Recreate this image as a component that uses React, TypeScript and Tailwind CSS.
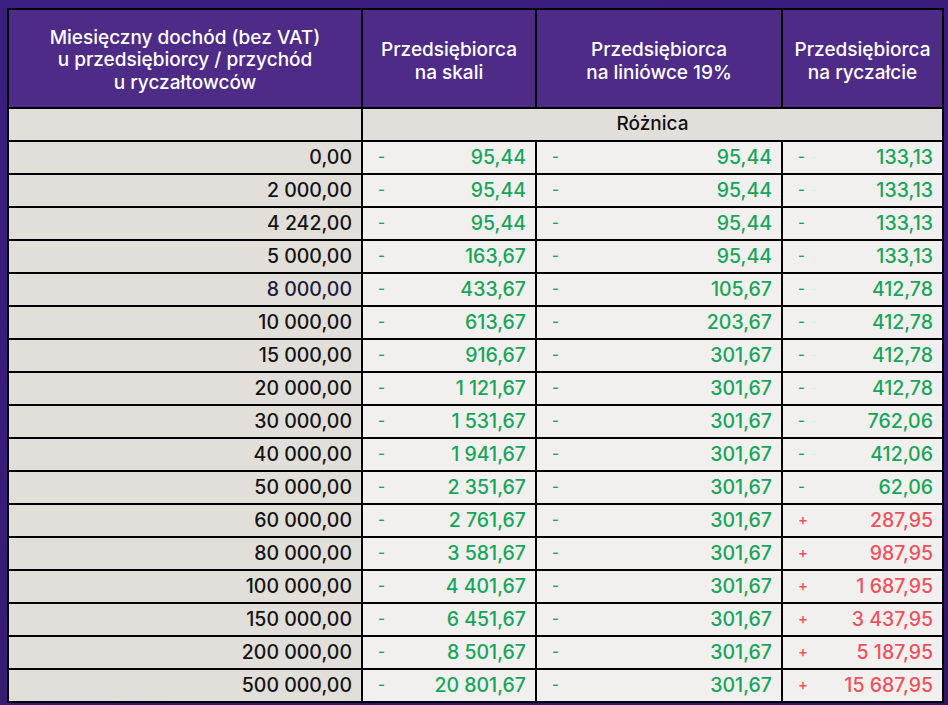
import React from "react";

type Cell = { sign: "-" | "+"; value: string };

const rows: { income: string; cells: Cell[] }[] = [
  { income: "0,00", cells: [{ sign: "-", value: "95,44" }, { sign: "-", value: "95,44" }, { sign: "-", value: "133,13" }] },
  { income: "2 000,00", cells: [{ sign: "-", value: "95,44" }, { sign: "-", value: "95,44" }, { sign: "-", value: "133,13" }] },
  { income: "4 242,00", cells: [{ sign: "-", value: "95,44" }, { sign: "-", value: "95,44" }, { sign: "-", value: "133,13" }] },
  { income: "5 000,00", cells: [{ sign: "-", value: "163,67" }, { sign: "-", value: "95,44" }, { sign: "-", value: "133,13" }] },
  { income: "8 000,00", cells: [{ sign: "-", value: "433,67" }, { sign: "-", value: "105,67" }, { sign: "-", value: "412,78" }] },
  { income: "10 000,00", cells: [{ sign: "-", value: "613,67" }, { sign: "-", value: "203,67" }, { sign: "-", value: "412,78" }] },
  { income: "15 000,00", cells: [{ sign: "-", value: "916,67" }, { sign: "-", value: "301,67" }, { sign: "-", value: "412,78" }] },
  { income: "20 000,00", cells: [{ sign: "-", value: "1 121,67" }, { sign: "-", value: "301,67" }, { sign: "-", value: "412,78" }] },
  { income: "30 000,00", cells: [{ sign: "-", value: "1 531,67" }, { sign: "-", value: "301,67" }, { sign: "-", value: "762,06" }] },
  { income: "40 000,00", cells: [{ sign: "-", value: "1 941,67" }, { sign: "-", value: "301,67" }, { sign: "-", value: "412,06" }] },
  { income: "50 000,00", cells: [{ sign: "-", value: "2 351,67" }, { sign: "-", value: "301,67" }, { sign: "-", value: "62,06" }] },
  { income: "60 000,00", cells: [{ sign: "-", value: "2 761,67" }, { sign: "-", value: "301,67" }, { sign: "+", value: "287,95" }] },
  { income: "80 000,00", cells: [{ sign: "-", value: "3 581,67" }, { sign: "-", value: "301,67" }, { sign: "+", value: "987,95" }] },
  { income: "100 000,00", cells: [{ sign: "-", value: "4 401,67" }, { sign: "-", value: "301,67" }, { sign: "+", value: "1 687,95" }] },
  { income: "150 000,00", cells: [{ sign: "-", value: "6 451,67" }, { sign: "-", value: "301,67" }, { sign: "+", value: "3 437,95" }] },
  { income: "200 000,00", cells: [{ sign: "-", value: "8 501,67" }, { sign: "-", value: "301,67" }, { sign: "+", value: "5 187,95" }] },
  { income: "500 000,00", cells: [{ sign: "-", value: "20 801,67" }, { sign: "-", value: "301,67" }, { sign: "+", value: "15 687,95" }] },
];

const headers = [
  ["Przedsiębiorca", "na skali"],
  ["Przedsiębiorca", "na liniówce 19%"],
  ["Przedsiębiorca", "na ryczałcie"],
];

export default function App() {
  return (
    <div className="h-[705px] w-[948px] overflow-hidden bg-[linear-gradient(160deg,#3c1d82_0%,#381b79_55%,#2f1766_100%)] pl-[7px] pt-[8px] font-['Inter','Liberation_Sans',sans-serif]">
      <table className="w-[935px] table-fixed border-collapse border-2 border-black">
        <colgroup>
          <col className="w-[354px]" />
          <col className="w-[174px]" />
          <col className="w-[246px]" />
          <col className="w-[161px]" />
        </colgroup>
        <thead>
          <tr className="h-[99px] bg-[#4e2b87] text-[19px] leading-[22.5px] text-white">
            <th className="border-2 border-black px-2 pt-[4px] font-medium">
              Miesięczny dochód (bez VAT)
              <br />u przedsiębiorcy / przychód
              <br />u ryczałtowców
            </th>
            {headers.map((h) => (
              <th key={h[1]} className="border-2 border-black px-1 pt-[6px] font-medium">
                {h[0]}
                <br />
                {h[1]}
              </th>
            ))}
          </tr>
          <tr className="h-[33px] bg-[#e2dfdb] text-[19px] text-[#111]">
            <th className="border-2 border-black" />
            <th colSpan={3} className="border-2 border-black font-medium">
              Różnica
            </th>
          </tr>
        </thead>
        <tbody>
          {rows.map((r) => (
            <tr key={r.income} className="h-[33px] text-[19.5px] font-medium">
              <td
                className={`border-2 border-black bg-[#e2dfdb] pr-[9px] text-right ${
                  r.income === "8 000,00" ? "text-[#1c1c3c]" : "text-[#141414]"
                }`}
              >
                {r.income}
              </td>
              {r.cells.map((c, i) => (
                <td key={i} className="border-2 border-black bg-[#f1f0ee] pr-[9px] pl-[15px]">
                  <div
                    className={`flex items-center justify-between ${
                      c.sign === "+" ? "text-[#f0505c]" : "text-[#17a55a]"
                    }`}
                  >
                    <span className="text-[15px]">{c.sign}</span>
                    <span>{c.value}</span>
                  </div>
                </td>
              ))}
            </tr>
          ))}
        </tbody>
      </table>
    </div>
  );
}
